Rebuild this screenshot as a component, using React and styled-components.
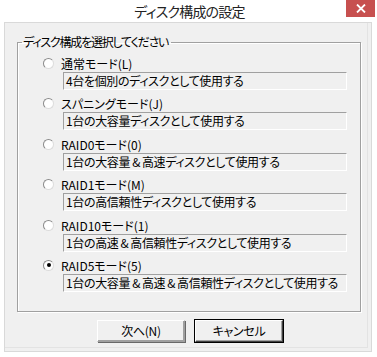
import React, { useState } from 'react'
import styled, { createGlobalStyle } from 'styled-components'

const GlobalStyle = createGlobalStyle`
  html, body {
    margin: 0;
    padding: 0;
    background: #ffffff;
  }
  body {
    font-family: "Noto Sans CJK JP", "Noto Sans", sans-serif;
    font-feature-settings: "palt";
    color: #000;
  }
`

const modes = [
  { label: '通常モード(L)', desc: '4台を個別のディスクとして使用する' },
  { label: 'スパニングモード(J)', desc: '1台の大容量ディスクとして使用する' },
  { label: 'RAID0モード(0)', desc: '1台の大容量＆高速ディスクとして使用する' },
  { label: 'RAID1モード(M)', desc: '1台の高信頼性ディスクとして使用する' },
  { label: 'RAID10モード(1)', desc: '1台の高速＆高信頼性ディスクとして使用する' },
  { label: 'RAID5モード(5)', desc: '1台の大容量＆高速＆高信頼性ディスクとして使用する' },
]

// full-width ampersand gets a little air on both sides, like the original font
const renderDesc = (text) =>
  text.split('＆').flatMap((part, i) =>
    i === 0 ? [part] : [<Amp key={i}>&amp;</Amp>, part]
  )

const App = () => {
  const [selected, setSelected] = useState(5)

  return (
    <>
      <GlobalStyle />
      <Window>
        <TitleBar>
          <Title>ディスク構成の設定</Title>
          <CloseButton aria-label="閉じる">
            <svg width="10" height="9" viewBox="0 0 10 9">
              <path d="M1 0.5 L9 8.5 M9 0.5 L1 8.5" stroke="#fff" strokeWidth="1.8" />
            </svg>
          </CloseButton>
        </TitleBar>
        <Client>
          <Group>
            <Legend>ディスク構成を選択してください</Legend>
            <Options>
              {modes.map((m, i) => (
                <Option key={m.label}>
                  <RadioRow onClick={() => setSelected(i)}>
                    <Radio $checked={selected === i} />
                    <span>{m.label}</span>
                  </RadioRow>
                  <Desc>{renderDesc(m.desc)}</Desc>
                </Option>
              ))}
            </Options>
          </Group>
          <ButtonBox>
            <Button>次へ(N)</Button>
            <Button $default>キャンセル</Button>
          </ButtonBox>
        </Client>
      </Window>
    </>
  )
}

export default App

const Window = styled.div`
  width: 377px;
  height: 357px;
  display: flex;
  flex-direction: column;
  background: #ffffff;
  box-sizing: border-box;
`

const TitleBar = styled.div`
  position: relative;
  height: 22px;
  display: flex;
  align-items: center;
  justify-content: center;
`

const Title = styled.div`
  font-size: 14px;
  letter-spacing: -0.8px;
  color: #222;
  margin-left: 2px;
  margin-top: -1px;
`

const CloseButton = styled.div`
  position: absolute;
  top: 0;
  right: 2px;
  width: 29px;
  height: 17px;
  background: #c7504f;
  display: flex;
  align-items: center;
  justify-content: center;
`

const Client = styled.div`
  flex: 1;
  margin: 0 5px 5px 4px;
  background: #f0f0f0;
  border: 1px solid #d9d9d9;
  box-shadow: inset -3px -3px 0 #f0f0f0, inset -4px -4px 0 #e3e3e3;
  display: flex;
  flex-direction: column;
`

const Group = styled.fieldset`
  margin: 12px 10px 0 12px;
  padding: 6px 13px 19px 25px;
  border: 1px solid #a0a0a0;
  box-shadow: 1px 1px 0 #ffffff, inset 1px 1px 0 #ffffff;
  min-width: 0;
`

const Legend = styled.legend`
  font-size: 12px;
  line-height: 14px;
  padding: 0 3px 0 1px;
  margin-left: -21px;
  letter-spacing: -1.2px;
`

const Options = styled.div`
  display: flex;
  flex-direction: column;
  gap: 5.4px;
`

const Option = styled.div`
  display: flex;
  flex-direction: column;
`

const RadioRow = styled.label`
  display: flex;
  align-items: center;
  gap: 7px;
  height: 17px;
  font-size: 12px;
  line-height: 17px;
  cursor: default;
`

const Radio = styled.span`
  width: 11px;
  height: 11px;
  box-sizing: border-box;
  border-radius: 50%;
  border: 1px solid;
  border-color: #8a8a8a #dcdcdc #dcdcdc #8a8a8a;
  background: #ffffff;
  display: flex;
  align-items: center;
  justify-content: center;
  &::after {
    content: '';
    width: 4px;
    height: 4px;
    border-radius: 50%;
    background: ${(p) => (p.$checked ? '#000' : 'transparent')};
  }
`

const Desc = styled.div`
  margin-left: 20px;
  height: 18px;
  box-sizing: border-box;
  border-style: solid;
  border-width: 1px;
  border-color: #a0a0a0 #ffffff #ffffff #a0a0a0;
  background: #f0f0f0;
  font-size: 12px;
  line-height: 16px;
  letter-spacing: -0.35px;
  padding-left: 2px;
  white-space: nowrap;
  overflow: hidden;
`

const Amp = styled.span`
  display: inline-block;
  padding: 0 2px;
`

const ButtonBox = styled.div`
  display: flex;
  justify-content: center;
  gap: 10px;
  margin-top: 8px;
  padding-left: 4px;
`

const Button = styled.button`
  width: 88px;
  height: 22px;
  box-sizing: border-box;
  background: #f0f0f0;
  font-family: inherit;
  font-feature-settings: "palt";
  font-size: 12px;
  letter-spacing: -0.3px;
  color: #000;
  padding: 0;
  border: 1px solid;
  border-color: ${(p) =>
    p.$default ? '#ffffff #404040 #404040 #ffffff' : '#ffffff #a0a0a0 #a0a0a0 #ffffff'};
  box-shadow: ${(p) =>
    p.$default
      ? '0 0 0 1px #000, inset -1px -1px 0 #a0a0a0'
      : '1px 1px 0 #696969, inset -1px -1px 0 #a0a0a0'};
`
